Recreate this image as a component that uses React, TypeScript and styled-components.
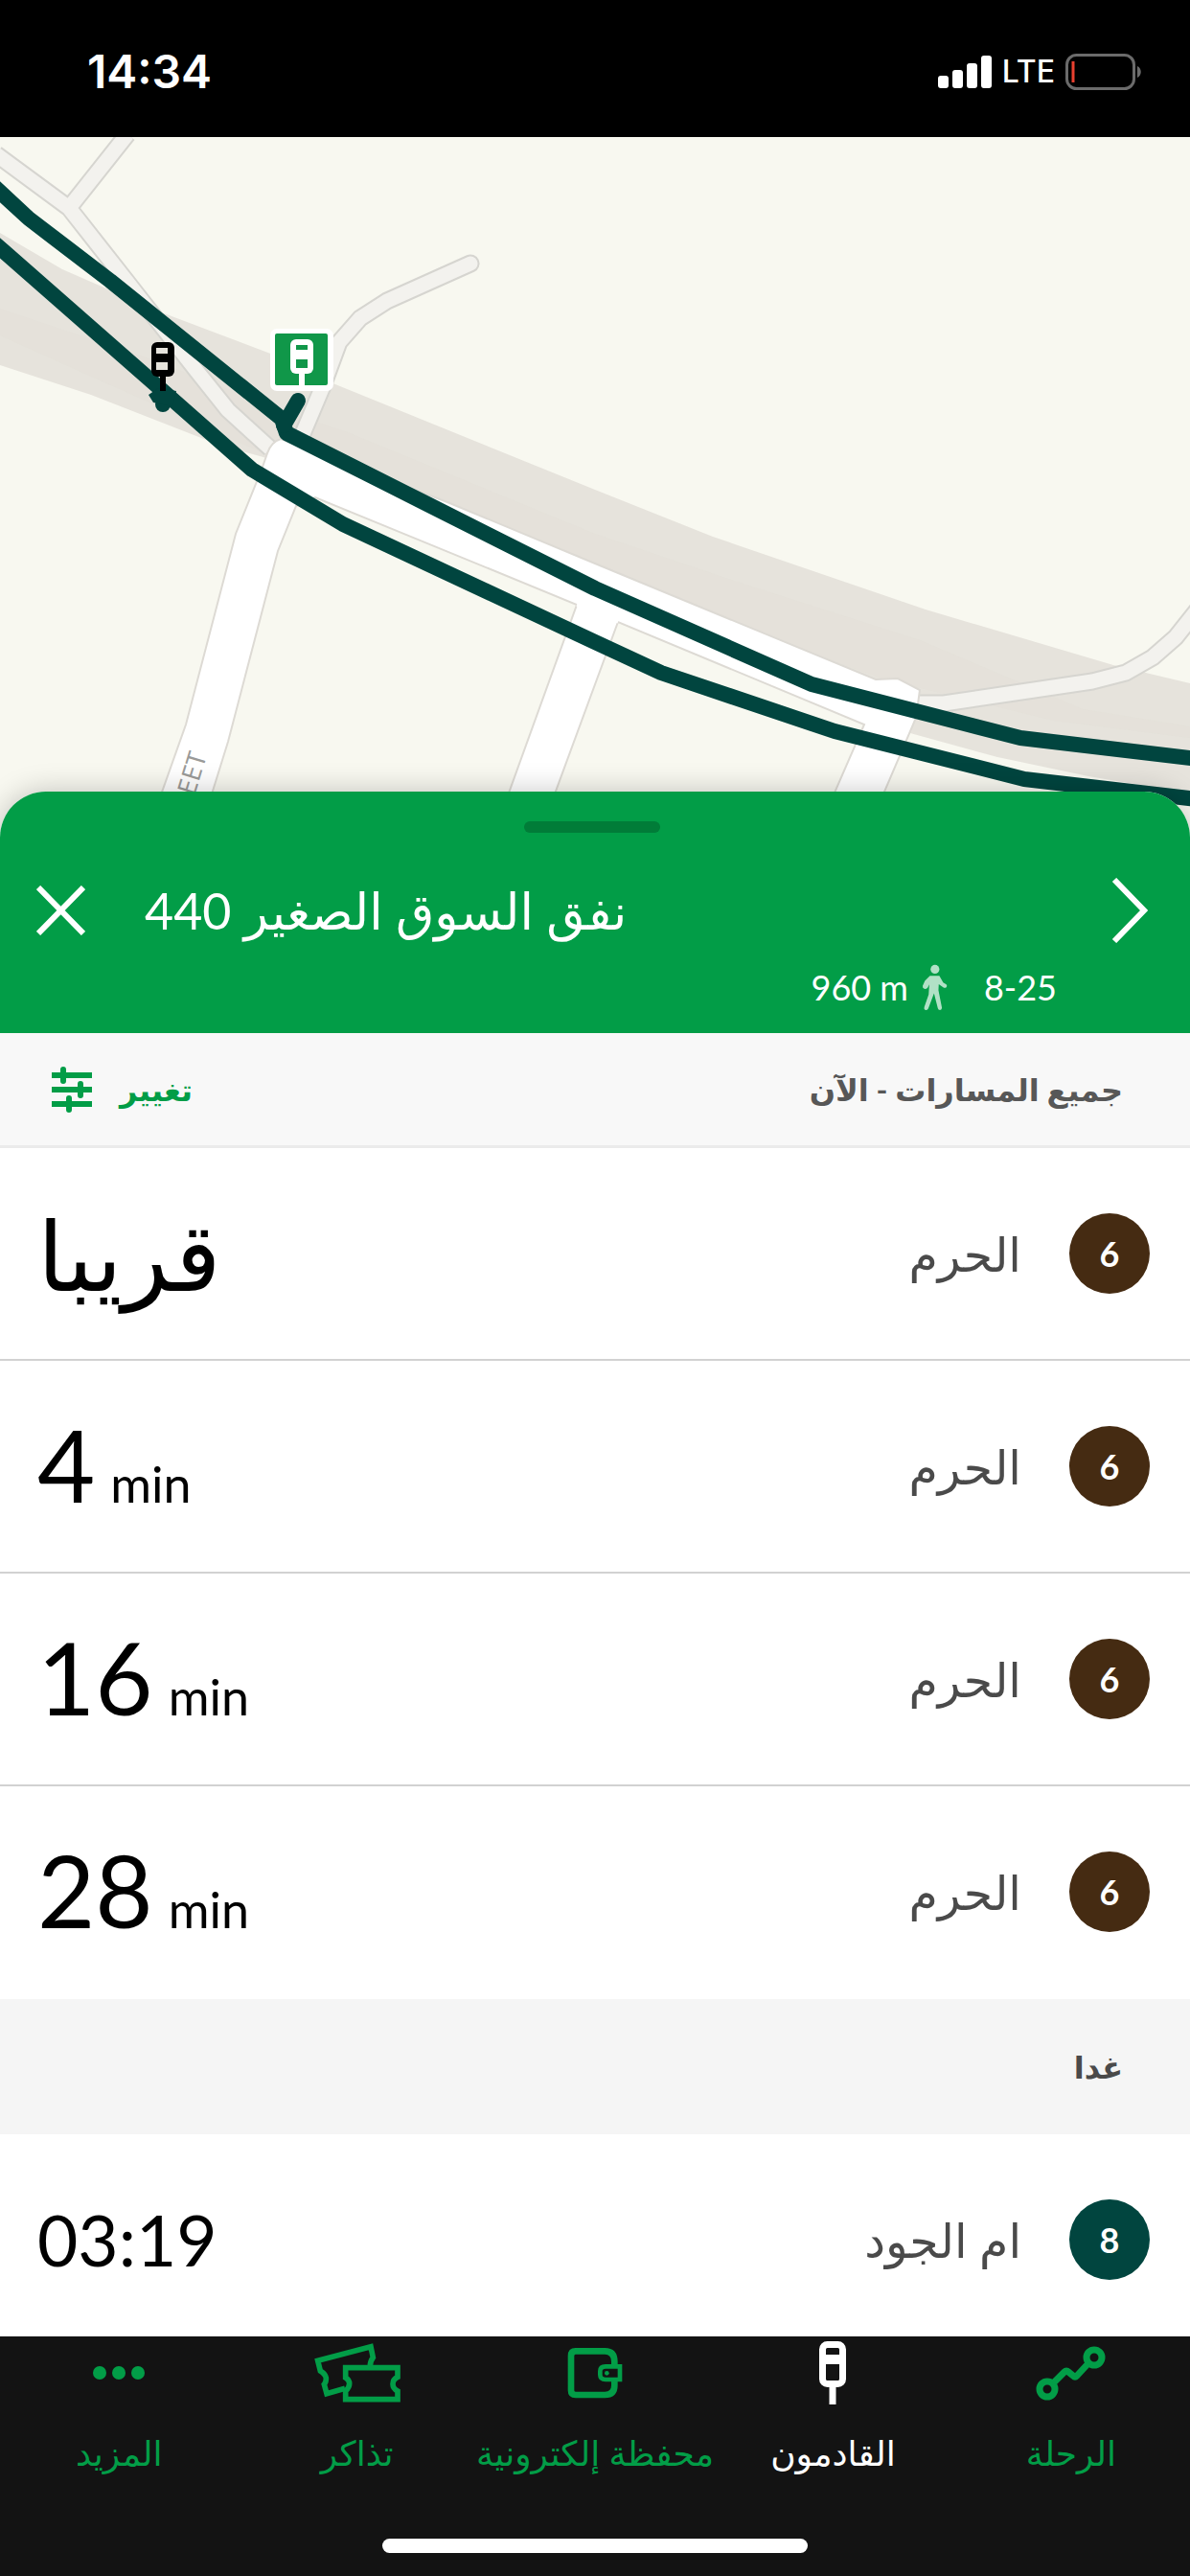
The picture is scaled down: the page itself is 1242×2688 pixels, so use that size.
import React from "react";
import styled, { createGlobalStyle } from "styled-components";

const green = "#029d47";
const darkTeal = "#01453f";
const brown = "#452b12";

const GlobalStyle = createGlobalStyle`
  * { box-sizing: border-box; }
  html, body { margin: 0; padding: 0; }
  body {
    background: #fff;
    color: #000;
    font-family: Lato, "DejaVu Sans", sans-serif;
  }
  button { font: inherit; color: inherit; background: none; border: 0; padding: 0; margin: 0; cursor: pointer; }
  ul { list-style: none; margin: 0; padding: 0; }
  h1, h2 { margin: 0; font-weight: 400; }
  svg { display: block; flex: none; }
`;

const Screen = styled.div`
  display: flex;
  flex-direction: column;
  height: 100vh;
  overflow: hidden;
`;

const StatusBar = styled.header`
  flex: none;
  display: flex;
  align-items: center;
  justify-content: space-between;
  height: 143px;
  padding: 6px 50px 0 91px;
  background: #000;
  color: #fff;
  font-family: Inter, sans-serif;
`;

const Clock = styled.time`
  font-size: 48px;
  line-height: 56px;
  font-weight: 600;
`;

const StatusIcons = styled.div`
  display: flex;
  align-items: center;
  gap: 11px;
`;

const Network = styled.span`
  font-size: 32px;
  line-height: 40px;
  font-weight: 500;
`;

const MapArea = styled.div`
  flex: none;
  height: 733px;
  background: #f8f8f0;
  svg { width: 100%; height: 100%; }
`;

const Sheet = styled.main`
  position: relative;
  flex: 1;
  min-height: 0;
  margin-top: -50px;
  border-radius: 48px 48px 0 0;
  background: #fff;
  box-shadow: 0 0 30px rgba(0, 0, 0, 0.22);
  overflow: hidden;
`;

const StopHeader = styled.section`
  display: flex;
  flex-direction: column;
  padding: 31px 44px 26px 38px;
  background: ${green};
  color: #fff;
`;

const Handle = styled.div`
  align-self: center;
  width: 142px;
  height: 12px;
  border-radius: 6px;
  background: #017c38;
`;

const TitleRow = styled.div`
  display: flex;
  align-items: center;
  height: 80px;
  margin-top: 41px;
`;

const StopTitle = styled.h1`
  margin-left: 62px;
  margin-right: auto;
  font-size: 52px;
  line-height: 80px;
`;

const MetaRow = styled.div`
  display: flex;
  justify-content: flex-end;
  align-items: center;
  gap: 14px;
  height: 44px;
  margin-top: 18px;
  padding-right: 95px;
  font-size: 36px;
  line-height: 44px;
`;

const Routes = styled.span`
  margin-left: 24px;
`;

const FilterBar = styled.div`
  display: flex;
  align-items: center;
  justify-content: space-between;
  height: 120px;
  padding: 0 70px 0 54px;
  background: #f8f8f8;
  border-bottom: 3px solid #ebebeb;
`;

const FilterButton = styled.button`
  display: flex;
  align-items: center;
  gap: 29px;
  color: ${green};
`;

const SmallHeading = styled.span<{ $color?: string }>`
  color: ${(p) => p.$color ?? "inherit"};
  font-size: 32px;
  line-height: 48px;
  font-weight: 700;
`;

const DayHeading = styled.h2`
  display: flex;
  align-items: center;
  justify-content: flex-end;
  height: 141px;
  padding-right: 70px;
  background: #f5f5f5;
`;

const Departure = styled.li`
  display: flex;
  align-items: center;
  height: 222px;
  padding: 0 42px 0 39px;
  border-bottom: 2px solid #d2d2d2;
  &:last-child { border-bottom-color: transparent; }
`;

const waitSizes = { word: 100, minutes: 104, clock: 73 };

const Wait = styled.span<{ $kind: keyof typeof waitSizes }>`
  display: flex;
  align-items: baseline;
  gap: 16px;
  margin-right: auto;
  padding-top: ${(p) => (p.$kind === "minutes" ? 16 : 0)}px;
  font-size: ${(p) => waitSizes[p.$kind]}px;
  line-height: 120px;
`;

const Unit = styled.span`
  font-size: 52px;
`;

const Destination = styled.span`
  color: #4a4a4a;
  font-size: 49px;
  line-height: 80px;
`;

const LineBadge = styled.span<{ $color: string }>`
  display: flex;
  align-items: center;
  justify-content: center;
  width: 84px;
  height: 84px;
  margin-left: 50px;
  border-radius: 50%;
  background: ${(p) => p.$color};
  color: #fff;
  font-size: 36px;
  line-height: 44px;
  font-weight: 700;
`;

const BottomBar = styled.footer`
  flex: none;
  position: relative;
  display: flex;
  flex-direction: column;
  align-items: center;
  height: 250px;
  background: #131313;
`;

const Tabs = styled.nav`
  display: grid;
  grid-template-columns: repeat(5, 1fr);
  width: 100%;
`;

const Tab = styled.button<{ $active?: boolean }>`
  display: flex;
  flex-direction: column;
  align-items: center;
  color: ${(p) => (p.$active ? "#fff" : green)};
  font-size: 36px;
  line-height: 50px;
  white-space: nowrap;
`;

const TabIcon = styled.span`
  display: flex;
  align-items: center;
  height: 76px;
  margin-bottom: 20px;
`;

const HomeIndicator = styled.div`
  width: 444px;
  height: 15px;
  margin-top: auto;
  margin-bottom: 24px;
  border-radius: 8px;
  background: #fff;
`;

const SignalIcon = () => (
  <svg width="56" height="34" viewBox="0 0 56 34" fill="#fff" aria-hidden="true">
    <rect x="0" y="21" width="11" height="13" rx="3" />
    <rect x="15" y="15" width="11" height="19" rx="3" />
    <rect x="30" y="8" width="11" height="26" rx="3" />
    <rect x="45" y="0" width="11" height="34" rx="3" />
  </svg>
);

const BatteryIcon = () => (
  <svg width="80" height="38" viewBox="0 0 80 38" fill="none" aria-hidden="true">
    <rect x="1.5" y="1.5" width="70" height="35" rx="10" stroke="#6b6b6b" strokeWidth="3" />
    <path d="M75 13c5 2 5 10 0 12z" fill="#6b6b6b" />
    <path d="M8 8v22" stroke="#e8402f" strokeWidth="3" />
  </svg>
);

const CloseIcon = () => (
  <svg width="51" height="52" viewBox="0 0 51 52" fill="none" stroke="#fff" strokeWidth="6" aria-hidden="true">
    <path d="M2 2l47 48M49 2L2 50" />
  </svg>
);

const ChevronIcon = () => (
  <svg width="38" height="68" viewBox="0 0 38 68" fill="none" stroke="#fff" strokeWidth="6" aria-hidden="true">
    <path d="M3 2l31 32L3 66" />
  </svg>
);

const WalkIcon = () => (
  <svg width="27" height="49" viewBox="36 30 82 148" fill="#b1e1c6" aria-hidden="true">
    <circle cx="78" cy="46" r="14" />
    <path d="M62 67H92L104 88L114 94Q118 99 114 103Q109 107 104 103L90 93L89 112L100 168Q100 175 94 175Q88 175 87 169L75 122L57 170Q55 176 48 175Q42 173 44 166L58 126L60 94L55 104Q52 110 44 108Q38 106 39 99L46 83Z" />
  </svg>
);

const FilterIcon = () => (
  <svg width="42" height="48" viewBox="0 0 42 48" stroke={green} fill="none" aria-hidden="true">
    <path d="M0 9h42M0 24h42M0 39h42" strokeWidth="6" />
    <path d="M12 3v12M30 18v12M18 33v12" strokeWidth="6" strokeLinecap="round" />
  </svg>
);

const MoreIcon = () => (
  <svg width="56" height="16" viewBox="0 0 56 16" fill="currentColor" aria-hidden="true">
    <circle cx="8" cy="8" r="7" />
    <circle cx="28" cy="8" r="7" />
    <circle cx="48" cy="8" r="7" />
  </svg>
);

const TicketsIcon = () => (
  <svg width="92" height="66" viewBox="18 15 276 198" fill="none" stroke="currentColor" strokeWidth="17" aria-hidden="true">
    <path d="M119 98H282V127Q267 134 267 149Q267 163 282 171V197H119V171Q131 160 131 148Q131 136 119 129Z" />
    <path d="M196 92Q196 78 205 66L198 32L32 76L40 108Q56 118 58 130Q59 142 52 150L60 179L117 163" />
  </svg>
);

const WalletIcon = () => (
  <svg width="58" height="54" viewBox="812 34 174 162" fill="none" stroke="currentColor" aria-hidden="true">
    <path d="M960 95V80Q960 47 930 47H838Q824 47 824 62V170Q824 184 838 184H930Q960 184 960 155V137" strokeWidth="20" />
    <path d="M977 95H932Q915 95 915 110V121Q915 136 932 136H977Z" strokeWidth="14" />
    <circle cx="936" cy="116" r="7" fill="currentColor" stroke="none" />
  </svg>
);

const StationIcon = () => (
  <svg width="28" height="66" viewBox="0 0 28 66" fill="none" stroke="currentColor" aria-hidden="true">
    <rect x="3.5" y="3.5" width="21" height="41" rx="5" strokeWidth="7" />
    <path d="M4 19h20" strokeWidth="10" />
    <path d="M14 46v20" strokeWidth="7" />
  </svg>
);

const TripIcon = () => (
  <svg width="73" height="57" viewBox="0 0 73 57" fill="none" stroke="currentColor" strokeWidth="7" strokeLinejoin="round" aria-hidden="true">
    <circle cx="12" cy="45" r="8" />
    <circle cx="61" cy="12" r="8" />
    <path d="M18 39L30 27Q32 25 34 27L39 31Q41 33 43 31L55 18" />
  </svg>
);

const MapDrawing = () => (
  <svg viewBox="0 143 1242 733" preserveAspectRatio="xMidYMin slice" fill="none" role="img" aria-label="Map">
    <path
      fill="#e6e3dc"
      d="M0 243L65 281L166 325L285 370L345 399L621 511L744 560L966 636L1162 694L1242 713V828L1136 810L1041 790L950 765L915 720L621 600L300 484L228 464L95 412L0 381Z"
    />
    <path
      fill="#e3dfd8"
      d="M0 322L150 372L300 430L360 450L621 557L760 604L960 668L1130 740L1242 758V770L1100 752L920 708L621 600L300 484L100 395L0 350Z"
      opacity="0.5"
    />
    <g strokeLinejoin="round">
      <g stroke="#d6d5d0" strokeWidth="19">
        <path d="M133 140L72 217M-4 161L72 217L131 292L206 388L238 428L282 468" />
        <path d="M491 275L404 314L376 332L354 357L337 403L312 462" strokeLinecap="round" />
        <path d="M1250 636L1227 665L1203 686L1175 702L1140 711L985 734H950" />
      </g>
      <g stroke="#f3f2ee" strokeWidth="15">
        <path d="M133 140L72 217M-4 161L72 217L131 292L206 388L238 428L282 468" />
        <path d="M491 275L404 314L376 332L354 357L337 403L312 462" strokeLinecap="round" />
        <path d="M1250 636L1227 665L1203 686L1175 702L1140 711L985 734H950" />
      </g>
    </g>
    <path
      fill="#fff"
      stroke="#dddad4"
      strokeWidth="2"
      d="M293 458L467 524L621 588L914 709L937 708L960 720L956 749L900 880H848L902 756L645 649L560 880H512L602 631L329 519L309 528L290 575L238 774L205 880H150L194 756L246 557L273 490L279 473Q283 461 293 458Z"
    />
    <path d="M602 631L645 649" stroke="#fff" strokeWidth="3" />
    <text
      x="0"
      y="0"
      transform="translate(216 788) rotate(-73)"
      textAnchor="end"
      fill="#9a9a98"
      fontFamily="'Open Sans', sans-serif"
      fontSize="27"
    >
      EET
    </text>
    <g stroke={darkTeal} strokeWidth="16" strokeLinejoin="round">
      <path d="M-10 191L30 228L115 293L294 437L299 452L446 526L621 614L847 714L1065 770L1250 792" />
      <path d="M-10 250L170 408L263 490L358 547L621 670L690 702L871 763L1069 813L1250 834" />
      <path d="M296 444L311 418" strokeLinecap="round" />
    </g>
    <g fill={darkTeal}>
      <circle cx="170" cy="422" r="8" />
      <path d="M155 412L165 405L184 408L180 424L160 420Z" />
    </g>
    <rect x="158" y="357" width="24" height="36" rx="6" fill="#000" />
    <path d="M163 363h12v6h-12zM163 378h12v8h-12z" fill="#e6e3dc" />
    <path d="M170 392v16" stroke="#000" strokeWidth="6" />
    <rect x="282" y="343" width="66" height="65" rx="7" fill="#fff" />
    <rect x="287" y="348" width="55" height="54" rx="2" fill="#109749" />
    <rect x="303" y="354" width="24" height="36" rx="6" fill="#fff" />
    <path d="M309 360h12v5h-12zM309 375h12v9h-12z" fill="#109749" />
    <path d="M315 389v14" stroke="#fff" strokeWidth="6" />
  </svg>
);

type DepartureInfo = { line: string; color: string; destination: string; wait: string; kind: keyof typeof waitSizes };

const today: DepartureInfo[] = [
  { line: "6", color: brown, destination: "الحرم", wait: "قريبا", kind: "word" },
  { line: "6", color: brown, destination: "الحرم", wait: "4", kind: "minutes" },
  { line: "6", color: brown, destination: "الحرم", wait: "16", kind: "minutes" },
  { line: "6", color: brown, destination: "الحرم", wait: "28", kind: "minutes" },
];

const tomorrow: DepartureInfo[] = [
  { line: "8", color: darkTeal, destination: "ام الجود", wait: "03:19", kind: "clock" },
];

const tabs = [
  { label: "المزيد", Icon: MoreIcon },
  { label: "تذاكر", Icon: TicketsIcon },
  { label: "محفظة إلكترونية", Icon: WalletIcon },
  { label: "القادمون", Icon: StationIcon, active: true },
  { label: "الرحلة", Icon: TripIcon },
];

const DepartureList = ({ items }: { items: DepartureInfo[] }) => (
  <ul>
    {items.map((d, i) => (
      <Departure key={i}>
        <Wait $kind={d.kind}>
          <span>{d.wait}</span>
          {d.kind === "minutes" && <Unit>min</Unit>}
        </Wait>
        <Destination dir="rtl">{d.destination}</Destination>
        <LineBadge $color={d.color}>{d.line}</LineBadge>
      </Departure>
    ))}
  </ul>
);

export default function App() {
  return (
    <Screen lang="ar">
      <GlobalStyle />
      <StatusBar>
        <Clock>14:34</Clock>
        <StatusIcons>
          <SignalIcon />
          <Network>LTE</Network>
          <BatteryIcon />
        </StatusIcons>
      </StatusBar>
      <MapArea>
        <MapDrawing />
      </MapArea>
      <Sheet>
        <StopHeader>
          <Handle />
          <TitleRow>
            <button type="button" aria-label="إغلاق"><CloseIcon /></button>
            <StopTitle dir="rtl">نفق السوق الصغير 440</StopTitle>
            <button type="button" aria-label="التفاصيل"><ChevronIcon /></button>
          </TitleRow>
          <MetaRow>
            <span>960 m</span>
            <WalkIcon />
            <Routes>8-25</Routes>
          </MetaRow>
        </StopHeader>
        <FilterBar>
          <FilterButton type="button">
            <FilterIcon />
            <SmallHeading dir="rtl">تغيير</SmallHeading>
          </FilterButton>
          <SmallHeading dir="rtl" $color="#575757">جميع المسارات - الآن</SmallHeading>
        </FilterBar>
        <DepartureList items={today} />
        <DayHeading>
          <SmallHeading dir="rtl" $color="#4a4a4a">غدا</SmallHeading>
        </DayHeading>
        <DepartureList items={tomorrow} />
      </Sheet>
      <BottomBar>
        <Tabs>
          {tabs.map(({ label, Icon, active }) => (
            <Tab key={label} type="button" $active={active}>
              <TabIcon><Icon /></TabIcon>
              <span dir="rtl">{label}</span>
            </Tab>
          ))}
        </Tabs>
        <HomeIndicator />
      </BottomBar>
    </Screen>
  );
}
